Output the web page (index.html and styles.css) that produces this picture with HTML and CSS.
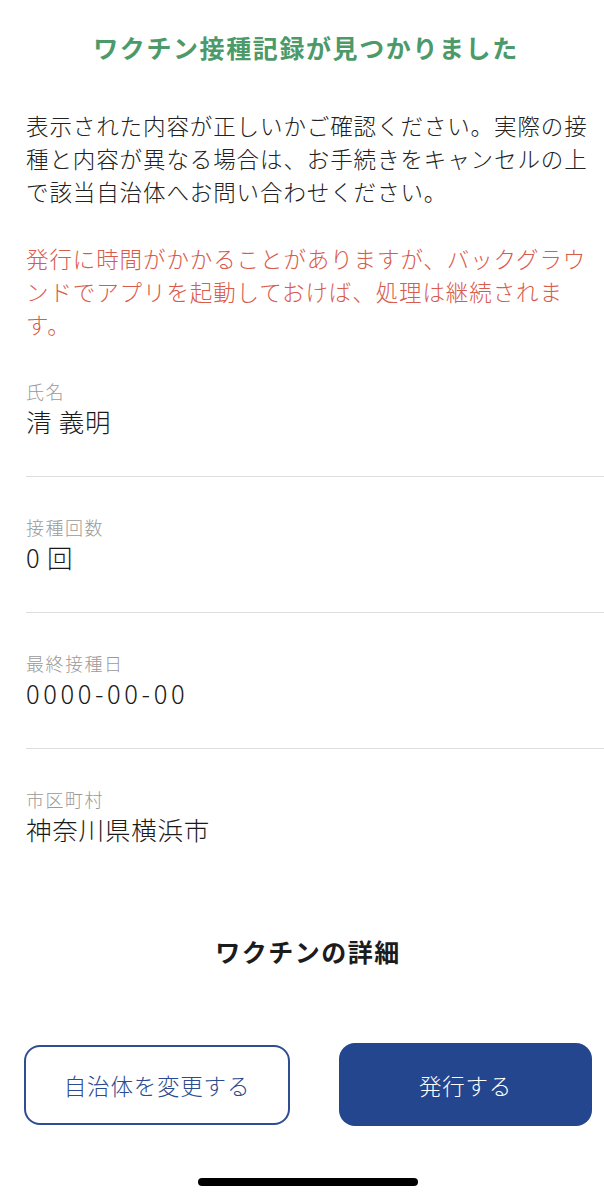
FILE: index.html
```html
<!DOCTYPE html>
<html lang="ja">
<head>
    <meta charset="UTF-8">
    <meta name="viewport" content="width=device-width, initial-scale=1.0">
    <title>ワクチン接種記録</title>
    <link rel="stylesheet" href="styles.css">
</head>
<body>
    <div class="screen">
        <h1 class="title">ワクチン接種記録が見つかりました</h1>

        <p class="intro">表示された内容が正しいかご確認ください。実際の接種と内容が異なる場合は、お手続きをキャンセルの上で該当自治体へお問い合わせください。</p>

        <p class="notice">発行に時間がかかることがありますが、バックグラウンドでアプリを起動しておけば、処理は継続されます。</p>

        <div class="fields">
            <div class="field">
                <div class="field-label">氏名</div>
                <div class="field-value">清 義明</div>
            </div>
            <div class="field">
                <div class="field-label">接種回数</div>
                <div class="field-value">0 回</div>
            </div>
            <div class="field">
                <div class="field-label">最終接種日</div>
                <div class="field-value num">0000-00-00</div>
            </div>
            <div class="field">
                <div class="field-label">市区町村</div>
                <div class="field-value">神奈川県横浜市</div>
            </div>
        </div>

        <h2 class="details">ワクチンの詳細</h2>

        <div class="actions">
            <button type="button" class="btn btn-outline">自治体を変更する</button>
            <button type="button" class="btn btn-primary">発行する</button>
        </div>

        <div class="home-indicator"></div>
    </div>
</body>
</html>
```

FILE: styles.css
```css
body {
    font-family: "Noto Sans CJK JP", "Noto Sans", sans-serif;
    font-weight: 300;
    margin: 0;
    padding: 0;
    background: #ffffff;
    color: #222222;
}

.screen {
    width: 604px;
    height: 1200px;
    overflow: hidden;
}

.title {
    margin: 0;
    padding: 30px 0 0 8px;
    text-align: center;
    font-size: 25px;
    line-height: 34px;
    font-weight: bold;
    letter-spacing: 1.6px;
    color: #4c9a6a;
}

.intro,
.notice {
    margin: 0;
    padding: 0 6px 0 26px;
    font-size: 22.5px;
    line-height: 33px;
    letter-spacing: 0.9px;
}

.intro {
    margin-top: 45px;
    color: #222222;
}

.notice {
    margin-top: 34px;
    color: #d95b4c;
}

.fields {
    padding-left: 26px;
}

.field {
    padding: 38px 0;
    border-bottom: 1px solid #dedede;
}

.field:last-child {
    border-bottom: none;
}

.field-label {
    font-size: 18px;
    line-height: 24px;
    letter-spacing: 1.5px;
    color: #9a9a9a;
}

.field-value {
    font-size: 25.5px;
    line-height: 35px;
    letter-spacing: 0.8px;
    color: #1a1a1a;
}

.field-value.num {
    letter-spacing: 3.6px;
}

.details {
    margin: 50px 0 0;
    padding-left: 12px;
    text-align: center;
    font-size: 25px;
    line-height: 34px;
    font-weight: bold;
    letter-spacing: 1.5px;
    color: #1c1c1c;
}

.actions {
    display: grid;
    grid-template-columns: 266fr 253fr;
    gap: 49px;
    align-items: center;
    margin-top: 75px;
    padding: 0 12px 0 24px;
}

.btn {
    font-family: inherit;
    font-weight: 300;
    font-size: 22.5px;
    letter-spacing: 0.8px;
    border-radius: 16px;
    cursor: pointer;
}

.btn-outline {
    height: 80px;
    background: #ffffff;
    color: #2c4a8f;
    border: 2px solid #2f4d92;
}

.btn-primary {
    height: 83px;
    background: #24468f;
    color: #ffffff;
    border: none;
}

.home-indicator {
    width: 220px;
    height: 8px;
    margin: 52px 0 0 198px;
    border-radius: 4px;
    background: #000000;
}
```
